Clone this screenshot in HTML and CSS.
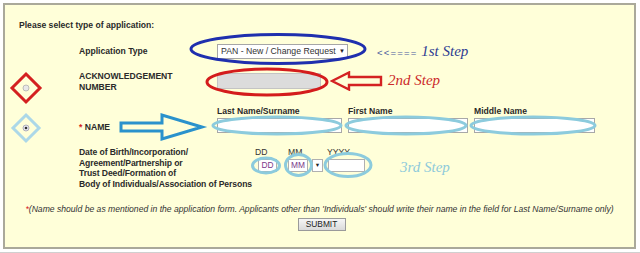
FILE: index.html
```html
<!DOCTYPE html>
<html>
<head>
<meta charset="utf-8">
<link rel="stylesheet" href="styles.css">
</head>
<body>
<div class="panel">
  <div class="heading">Please select type of application:</div>

  <div class="row row-type">
    <div class="label">Application Type</div>
    <div class="field">
      <div class="select"><span class="sel-text">PAN - New / Change Request</span><span class="caret">&#9660;</span></div>
      <span class="step step1"><span class="arrows">&lt;&lt;====</span> 1st Step</span>
    </div>
  </div>

  <div class="row row-ack">
    <div class="label">ACKNOWLEDGEMENT<br>NUMBER</div>
    <div class="field">
      <div class="input input-ack"></div>
      <svg class="arrow-red" width="54" height="20" viewBox="0 0 54 20"><path d="M2 10 L19 1.5 L19 6 L51 6 L51 14 L19 14 L19 18.5 Z" fill="none" stroke="#d42222" stroke-width="2.4" stroke-linejoin="miter"/></svg>
      <span class="step step2">2nd Step</span>
    </div>
  </div>

  <div class="row row-name">
    <div class="label label-name"><span class="req">*</span> NAME</div>
    <div class="name-fields">
      <div class="name-col col-last">
        <div class="sub">Last Name/Surname</div>
        <div class="input"></div>
      </div>
      <div class="name-col col-first">
        <div class="sub">First Name</div>
        <div class="input"></div>
      </div>
      <div class="name-col col-middle">
        <div class="sub">Middle Name</div>
        <div class="input"></div>
      </div>
    </div>
  </div>

  <div class="row row-dob">
    <div class="label label-dob">Date of Birth/Incorporation/<br>Agreement/Partnership or<br>Trust Deed/Formation of<br>Body of Individuals/Association of Persons</div>
    <div class="dob">
      <div class="dob-col dd">
        <div class="dob-sub">DD</div>
        <div class="box box-dd">DD</div>
      </div>
      <div class="dob-col mm">
        <div class="dob-sub">MM</div>
        <div class="mm-wrap"><div class="box box-mm">MM</div><div class="box box-caret">&#9660;</div></div>
      </div>
      <div class="dob-col yy">
        <div class="dob-sub">YYYY</div>
        <div class="box box-yy"></div>
      </div>
      <span class="step step3">3rd Step</span>
    </div>
  </div>

  <div class="note"><span class="req">*</span>(Name should be as mentioned in the application form. Applicants other than 'Individuals' should write their name in the field for Last Name/Surname only)</div>
  <div class="actions"><div class="submit">SUBMIT</div></div>
</div>
<div class="baseline"></div>

<svg class="marks" width="640" height="253" viewBox="0 0 640 253">
  <ellipse cx="278" cy="49" rx="87" ry="14.5" fill="none" stroke="#1f2fae" stroke-width="3"/>
  <ellipse cx="267" cy="82" rx="60" ry="13" fill="none" stroke="#d41c1c" stroke-width="3"/>
  <path d="M26 74 L40 88 L26 102 L12 88 Z" fill="none" stroke="#d42020" stroke-width="3"/>
  <circle cx="26" cy="88" r="3" fill="#e8e8e8" stroke="#b0b0b0" stroke-width="0.8"/>
  <path d="M26 115 L39 128 L26 141 L13 128 Z" fill="none" stroke="#acd8e8" stroke-width="3"/>
  <circle cx="26" cy="128" r="3" fill="#e8e8f0" stroke="#a0a0b0" stroke-width="0.8"/>
  <circle cx="26" cy="128" r="1.3" fill="#333"/>
  <path d="M121 123 L162 123 L162 115 L202 127 L162 139 L162 131 L121 131 Z" fill="none" stroke="#2a92cc" stroke-width="3" stroke-linejoin="miter"/>
  <ellipse cx="277" cy="125.5" rx="64" ry="8.5" fill="none" stroke="#8ccbdd" stroke-width="3"/>
  <ellipse cx="406" cy="125.5" rx="60" ry="8.5" fill="none" stroke="#8ccbdd" stroke-width="3"/>
  <ellipse cx="533" cy="125.5" rx="62" ry="8.5" fill="none" stroke="#8ccbdd" stroke-width="3"/>
  <ellipse cx="266" cy="165.5" rx="13.5" ry="7.5" fill="none" stroke="#8ccbdd" stroke-width="3"/>
  <ellipse cx="298.5" cy="165" rx="13" ry="10.5" fill="none" stroke="#8ccbdd" stroke-width="3"/>
  <ellipse cx="348" cy="165" rx="23" ry="11.5" fill="none" stroke="#8ccbdd" stroke-width="3"/>
</svg>
</body>
</html>
```

FILE: styles.css
```css
html, body {
  margin: 0;
  padding: 0;
  background: #ffffff;
}
body {
  position: relative;
  width: 640px;
  height: 253px;
  overflow: hidden;
  font-family: "Liberation Sans", Arial, sans-serif;
  color: #222;
}
.panel {
  margin: 3px 0 0 3px;
  width: 633px;
  height: 246px;
  border: 2px solid #aaa99a;
  background: #ffffd9;
  box-sizing: border-box;
}
.heading {
  padding: 15px 0 0 14px;
  font-size: 8.6px;
  font-weight: bold;
  line-height: 11px;
  color: #2a2a2a;
}
.row {
  display: flex;
  padding-left: 74px;
}
.label {
  width: 138px;
  flex: none;
  font-size: 8.6px;
  font-weight: bold;
  line-height: 11px;
  color: #2a2a2a;
}
.field {
  display: flex;
  align-items: center;
}
.row-type {
  margin-top: 12px;
  height: 16px;
  align-items: center;
}
.select {
  width: 131px;
  height: 15px;
  box-sizing: border-box;
  border: 1px solid #a6a6a6;
  background: #fff;
  font-size: 8.7px;
  line-height: 13px;
  padding-left: 3px;
  color: #333;
  display: flex;
  justify-content: space-between;
  white-space: nowrap;
  overflow: hidden;
}
.caret {
  font-size: 6px;
  width: 10px;
  flex: none;
  text-align: center;
  color: #222;
}
.step {
  font-family: "Liberation Serif", "DejaVu Serif", serif;
  font-style: italic;
  font-size: 15px;
}
.step1 {
  margin-left: 29px;
  color: #2e3c92;
}
.arrows {
  font-family: "Liberation Sans", Arial, sans-serif;
  font-style: normal;
  font-size: 9.5px;
  color: #4a5a9e;
  letter-spacing: 1.2px;
}
.row-ack {
  margin-top: 12px;
  height: 22px;
  align-items: center;
}
.input {
  height: 15px;
  box-sizing: border-box;
  border: 1px solid #a8a8a8;
  background: #fff;
}
.input-ack {
  width: 104px;
  height: 16px;
  background: #dcdcdc;
  border-color: #c4c4c4;
  margin-top: -2px;
}
.arrow-red {
  margin-left: 9px;
  margin-top: -2px;
}
.step2 {
  margin-left: 4px;
  margin-top: -4px;
  color: #cc2a2a;
}
.row-name {
  margin-top: 13px;
}
.label-name {
  padding-top: 16px;
}
.req {
  color: #d42020;
}
.name-fields {
  display: flex;
  gap: 6px;
}
.sub {
  font-size: 8.6px;
  font-weight: bold;
  line-height: 11px;
  height: 12px;
  color: #2a2a2a;
}
.col-last .input { width: 125px; }
.col-first .input { width: 120px; }
.col-middle .input { width: 121px; }
.row-dob {
  margin-top: 14px;
}
.label-dob {
  line-height: 10.7px;
  width: 176px;
  white-space: nowrap;
  letter-spacing: -0.1px;
}
.dob {
  display: flex;
  align-items: flex-start;
}
.dob-sub {
  font-size: 8.6px;
  line-height: 10px;
  height: 10px;
  color: #333;
}
.dob-col.dd { width: 33px; }
.dob-col.mm { width: 39px; }
.box {
  height: 13px;
  box-sizing: border-box;
  border: 1px solid #b0b0b0;
  background: #fff;
  font-size: 8.4px;
  line-height: 11px;
  color: #7a3a8a;
  text-align: center;
  margin-top: 2px;
}
.box-dd { width: 19px; margin-left: 3px; }
.mm-wrap { display: flex; gap: 4px; }
.box-mm { width: 20px; }
.box-caret { width: 11px; font-size: 5.5px; color: #222; line-height: 11px; }
.box-yy { width: 37px; margin-left: 1px; }
.step3 {
  margin-left: 35px;
  margin-top: 12px;
  color: #8ecadb;
}
.note {
  margin-top: 13px;
  font-size: 8.6px;
  font-style: italic;
  line-height: 12px;
  text-align: center;
  color: #333;
}
.actions {
  display: flex;
  justify-content: center;
  margin-top: 3px;
}
.submit {
  width: 48px;
  height: 13px;
  box-sizing: border-box;
  border: 1px solid #9a9a9a;
  background: linear-gradient(#f6f6f6, #dadada);
  font-size: 8.4px;
  line-height: 11px;
  text-align: center;
  color: #222;
  margin-left: 4px;
}
.baseline {
  margin-top: 3px;
  height: 1px;
  background: #d0d0d0;
}
.marks {
  position: absolute;
  left: 0;
  top: 0;
  pointer-events: none;
}
```
